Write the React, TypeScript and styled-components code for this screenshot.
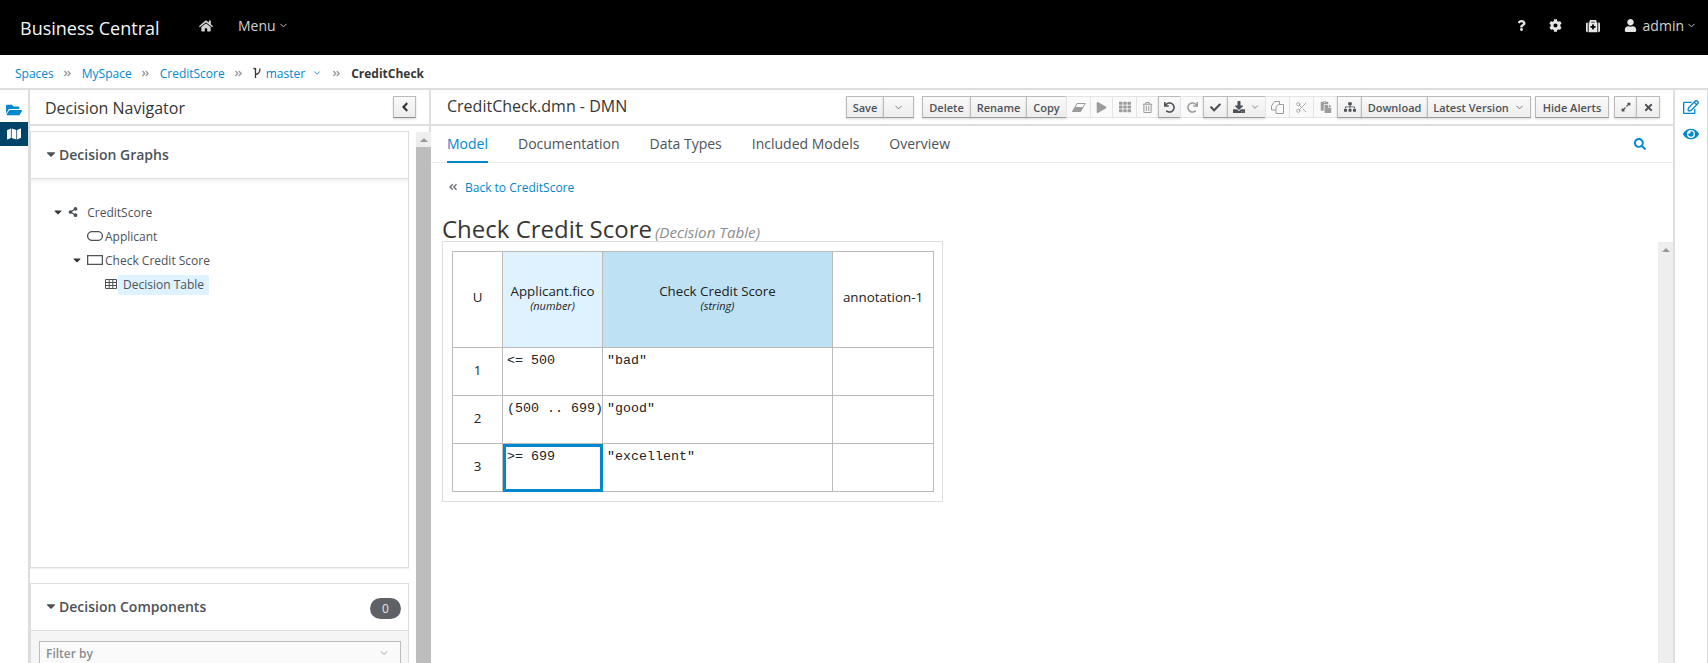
import React from 'react';
import styled, { createGlobalStyle } from 'styled-components';
import { ChevronDown, Scissors } from 'lucide-react';
import {
    FaHome, FaCog, FaMedkit, FaUser, FaQuestion, FaFolderOpen, FaMap, FaAngleLeft,
    FaAngleDoubleRight, FaAngleDoubleLeft, FaCaretDown, FaShareAlt, FaPlay, FaTh, FaRegTrashAlt,
    FaUndo, FaRedo, FaCheck, FaDownload, FaPaste, FaSitemap, FaExpandAlt, FaTimes,
    FaRegEdit, FaEye, FaSearch,
} from 'react-icons/fa';

const GlobalStyle = createGlobalStyle`
    html, body {
        margin: 0;
        padding: 0;
        height: 663px;
        overflow: hidden;
        background: #fff;
        font-family: "Open Sans", "Liberation Sans", sans-serif;
        color: #363636;
    }
    * { box-sizing: border-box; }
`;

const Page = styled.div`
    height: 663px;
    display: flex;
    flex-direction: column;
`;

const TopBar = styled.header`
    height: 55px;
    background: #000;
    color: #d1d1d1;
    display: flex;
    align-items: center;
    padding: 0 11px 0 20px;
    flex: none;
`;

const Brand = styled.div`
    font-size: 18px;
    color: #f5f5f5;
    width: 179px;
`;

const NavItem = styled.div<{ $gap?: number }>`
    display: flex;
    align-items: center;
    font-size: 14px;
    gap: 2px;
    margin-right: ${(p) => p.$gap ?? 0}px;
    margin-bottom: 4px;
`;

const Spacer = styled.div`
    flex: 1;
`;

const Crumbs = styled.nav`
    height: 35px;
    flex: none;
    border-bottom: 2px solid #dedede;
    display: flex;
    align-items: center;
    padding: 3px 0 0 15px;
    font-size: 12px;
    color: #72767b;
`;

const CrumbLink = styled.a`
    display: flex;
    align-items: center;
    color: #0088ce;
`;

const BranchName = styled(CrumbLink)`
    gap: 7px;
    margin-left: 5px;
    margin-right: 1px;
`;

const CrumbSep = styled.span`
    display: flex;
    color: #9c9c9c;
    margin: 0 10px 0 9px;
`;

const CrumbCurrent = styled.strong`
    color: #363636;
    font-weight: 700;
`;

const Body = styled.div`
    flex: 1;
    display: flex;
    min-height: 0;
`;

const LeftRail = styled.aside`
    width: 30px;
    flex: none;
    border-right: 2px solid #dedede;
    display: flex;
    flex-direction: column;
    padding-top: 8px;
`;

const RailItem = styled.div<{ $active?: boolean }>`
    height: 24px;
    display: flex;
    align-items: center;
    justify-content: center;
    font-size: 16px;
    background: ${(p) => (p.$active ? '#004368' : 'transparent')};
    color: ${(p) => (p.$active ? '#fff' : '#0088ce')};
`;

const NavPanel = styled.section`
    width: 401px;
    flex: none;
    border-right: 2px solid #dedede;
    display: flex;
    flex-direction: column;
`;

const PanelHead = styled.div`
    height: 36px;
    flex: none;
    border-bottom: 2px solid #dedede;
    display: flex;
    align-items: center;
    justify-content: space-between;
    padding: 1px 13px 0 15px;
    font-size: 16px;
`;

const Collapse = styled.div`
    width: 23px;
    height: 22px;
    margin-top: -1px;
    border: 1px solid #bbb;
    border-bottom-color: #8b8d8f;
    background: linear-gradient(#fafafa, #ededed);
    box-shadow: 0 1px 2px rgba(0, 0, 0, 0.15);
    display: flex;
    align-items: center;
    justify-content: center;
    font-size: 14px;
    color: #363636;
`;

const PanelBody = styled.div`
    flex: 1;
    display: flex;
    min-height: 0;
`;

const Cards = styled.div`
    width: 386px;
    flex: none;
    padding-top: 5px;
    display: flex;
    flex-direction: column;
    gap: 15px;
`;

const Card = styled.div`
    margin-left: -1px;
    margin-right: 7px;
    border: 1px solid #dedede;
    border-left-width: 2px;
    box-shadow: 0 1px 1px rgba(0, 0, 0, 0.06);
    flex: none;
`;

const CardHead = styled.div`
    height: 47px;
    display: flex;
    align-items: center;
    justify-content: space-between;
    padding: 0 7px 2px 13px;
    font-size: 14px;
    font-weight: 600;
    color: #4d5258;
    border-bottom: 1px solid #dedede;
`;

const CardTitle = styled.div`
    display: flex;
    align-items: center;
    gap: 1px;
`;

const Badge = styled.span`
    width: 31px;
    height: 21px;
    margin-top: 4px;
    border-radius: 11px;
    background: #5e6166;
    color: #e6e6e6;
    font-size: 12px;
    font-weight: 400;
    display: flex;
    align-items: center;
    justify-content: center;
`;

const TreeBody = styled.div`
    height: 388px;
    padding: 21px 0 0 21px;
    box-shadow: inset 0 6px 6px -6px rgba(0, 0, 0, 0.12);
`;

const TreeRow = styled.div<{ $indent: number }>`
    height: 24px;
    display: flex;
    align-items: center;
    padding-left: ${(p) => p.$indent}px;
    font-size: 12px;
    color: #4d5258;
`;

const TreeCaret = styled.span`
    width: 16px;
    display: flex;
    font-size: 12px;
    color: #363636;
`;

const TreeIcon = styled.span<{ $gap?: number }>`
    display: flex;
    margin-right: ${(p) => p.$gap ?? 2}px;
    color: #4d5258;
`;

const Selected = styled.span`
    background: #def3ff;
    border-radius: 2px;
    padding: 2px 5px;
    height: 20px;
    line-height: 16px;
    margin-top: 2px;
`;

const FilterWrap = styled.div`
    background: #f5f5f5;
    height: 60px;
    padding: 10px 8px;
`;

const FilterBox = styled.div`
    height: 30px;
    border: 1px solid #bbb;
    background: #fafafa;
    margin-right: -1px;
    padding: 0 10px 6px 6px;
    display: flex;
    align-items: center;
    justify-content: space-between;
    font-size: 12px;
    font-weight: 600;
    color: #8b8d8f;
`;

const ScrollBar = styled.div<{ $top: number }>`
    width: 15px;
    flex: none;
    margin-top: ${(p) => p.$top}px;
    background: #eee;
    display: flex;
    flex-direction: column;
`;

const ScrollArrow = styled.div`
    height: 15px;
    flex: none;
    display: flex;
    align-items: center;
    justify-content: center;
    &::before {
        content: '';
        border-left: 4px solid transparent;
        border-right: 4px solid transparent;
        border-bottom: 4px solid #999;
    }
`;

const ScrollThumb = styled.div`
    flex: 1;
    background: #bdbdbd;
`;

const Editor = styled.main`
    flex: 1;
    min-width: 0;
    display: flex;
    flex-direction: column;
`;

const EditorHead = styled.div`
    height: 36px;
    flex: none;
    border-bottom: 2px solid #dedede;
    display: flex;
    align-items: center;
    padding: 0 0 0 16px;
`;

const EditorTitle = styled.div`
    font-size: 16px;
    width: 399px;
    margin-bottom: 2px;
`;

const Toolbar = styled.div`
    display: flex;
    align-items: center;
`;

const ToolGroup = styled.div<{ $gap?: number }>`
    display: flex;
    margin-left: ${(p) => p.$gap ?? 0}px;
`;

const ToolBtn = styled.div<{ $w: number; $off?: boolean }>`
    width: ${(p) => p.$w}px;
    height: 22px;
    margin-right: -1px;
    border: 1px solid ${(p) => (p.$off ? '#e4e4e4' : '#bbb')};
    border-bottom-color: ${(p) => (p.$off ? '#e4e4e4' : '#9a9c9e')};
    background: ${(p) => (p.$off ? '#fafafa' : 'linear-gradient(#fafafa, #ededed)')};
    box-shadow: ${(p) => (p.$off ? 'none' : '0 1px 2px rgba(0, 0, 0, 0.15)')};
    color: ${(p) => (p.$off ? '#9c9c9c' : '#4d5258')};
    display: flex;
    align-items: center;
    justify-content: center;
    gap: 5px;
    font-size: 11px;
    font-weight: 600;
`;

const Tabs = styled.div`
    height: 37px;
    flex: none;
    border-bottom: 1px solid #ededed;
    display: flex;
    align-items: stretch;
    padding: 0 62px 0 16px;
    gap: 30px;
    font-size: 14px;
    color: #4d5258;
`;

const Tab = styled.div<{ $active?: boolean }>`
    display: flex;
    align-items: center;
    color: ${(p) => (p.$active ? '#0088ce' : '#4d5258')};
    border-bottom: 2px solid ${(p) => (p.$active ? '#0088ce' : 'transparent')};
    margin-bottom: -1px;
`;

const TabSearch = styled.div`
    margin-left: auto;
    display: flex;
    align-items: center;
    color: #0088ce;
    font-size: 12px;
`;

const EditorMain = styled.div`
    flex: 1;
    min-height: 0;
    display: flex;
`;

const Canvas = styled.div`
    flex: 1;
    min-width: 0;
    padding: 0 0 0 11px;
`;

const Back = styled.div`
    height: 52px;
    padding: 16px 0 0 6px;
    font-size: 12px;
    display: flex;
    align-items: flex-start;
    color: #0088ce;
`;

const BackIcon = styled.span`
    display: flex;
    color: #72767b;
    margin: 3px 7px 0 0;
    font-size: 10px;
`;

const Heading = styled.div`
    font-size: 24px;
    line-height: 28px;
    display: flex;
    align-items: baseline;
    gap: 3px;
    height: 26px;
`;

const HeadingSub = styled.small`
    font-size: 15.2px;
    font-style: italic;
    color: #8b8d8f;
`;

const TableBox = styled.div`
    width: 501px;
    height: 261px;
    border: 1px solid #dedede;
    padding: 9px;
`;

const Grid = styled.table`
    border-collapse: collapse;
    table-layout: fixed;
    width: 481px;
    height: 241px;
    color: #222;
`;

const Cell = styled.td<{ $bg?: string }>`
    border: 1px solid #bbb;
    background: ${(p) => p.$bg ?? '#fff'};
    padding: 0 0 5px;
    text-align: center;
    font-size: 13.33px;
    line-height: 16px;
`;

const RowCell = styled(Cell)`
    padding-bottom: 3px;
`;

const MonoCell = styled.td<{ $selected?: boolean }>`
    border: 1px solid #bbb;
    padding: 5px 0 0 4px;
    vertical-align: top;
    font: 13.33px/16px "Liberation Mono", monospace;
    white-space: nowrap;
    overflow: visible;
    ${(p) => p.$selected && 'outline: 3px solid #0088ce; outline-offset: -3px;'}
`;

const TypeLabel = styled.div`
    font-size: 11px;
    line-height: 13px;
    font-style: italic;
`;

const RightRail = styled.aside`
    width: 35px;
    flex: none;
    margin-top: -73px;
    border-left: 2px solid #dedede;
    border-right: 1px solid #dedede;
    display: flex;
    flex-direction: column;
    align-items: center;
    padding-top: 9px;
    gap: 11px;
    color: #0088ce;
    font-size: 16px;
    z-index: 1;
    background: #fff;
`;

const RailIcon = styled.div`
    height: 16px;
    display: flex;
    align-items: center;
`;

const BranchIcon = () => (
    <svg width="8" height="12" viewBox="0 0 8 12" fill="none" stroke="#363636" strokeWidth="1.3">
        <path d="M2.5 1v10M2.5 7.5c3-.5 4.5-2.500 4.500-6M0.500 1l2 1.500" />
    </svg>
);

const EraserIcon = () => (
    <svg width="14" height="9" viewBox="0 0 14 9" fill="none" stroke="currentColor" strokeWidth="1">
        <path d="M5 .5h8.300L8.500 8.500H.7Z" />
        <path d="M3 4.500h7.500L8.500 8.500H.7Z" fill="currentColor" />
    </svg>
);

const CloneIcon = () => (
    <svg width="13" height="13" viewBox="0 0 13 13" fill="none" stroke="currentColor" strokeWidth="1">
        <path d="M.5 5 3.500.5H8.500V9H.5Z" />
        <path d="M5 5.500 7.500 3.500H12.500V12.500H5Z" fill="#fafafa" />
    </svg>
);

const TableIcon = () => (
    <svg width="12" height="10" viewBox="0 0 12 10" fill="none" stroke="#4d5258" strokeWidth="1">
        <path d="M.5.5h11v9H.5ZM.5 3.500h11M.5 6.500h11M4.200 .5v9M7.800 .5v9" />
    </svg>
);

const DecisionShape = ({ rounded }: { rounded?: boolean }) => (
    <svg width="16" height="10" viewBox="0 0 16 10" fill="none" stroke="#4d5258" strokeWidth="1.3">
        <rect x="0.6" y="0.6" width="14.8" height="8.8" rx={rounded ? 4.4 : 0} />
    </svg>
);

const Sep = () => (
    <CrumbSep>
        <FaAngleDoubleRight size={9} />
    </CrumbSep>
);

const rows: { n: number; input: string; output: string; selected?: boolean }[] = [
    { n: 1, input: '<= 500', output: '"bad"' },
    { n: 2, input: '(500 .. 699)', output: '"good"' },
    { n: 3, input: '>= 699', output: '"excellent"', selected: true },
];

export default function App() {
    return (
        <Page>
            <GlobalStyle />
            <TopBar>
                <Brand>Business Central</Brand>
                <NavItem $gap={25}><FaHome size={14} /></NavItem>
                <NavItem>Menu <ChevronDown size={11} strokeWidth={2} /></NavItem>
                <Spacer />
                <NavItem $gap={22}><FaQuestion size={11} color="#e6e6e6" /></NavItem>
                <NavItem $gap={24}><FaCog size={13} color="#e6e6e6" /></NavItem>
                <NavItem $gap={24}><FaMedkit size={14} color="#e6e6e6" /></NavItem>
                <NavItem><FaUser size={13} color="#e6e6e6" /><span>&nbsp;admin</span> <ChevronDown size={11} strokeWidth={2} /></NavItem>
            </TopBar>
            <Crumbs>
                <CrumbLink>Spaces</CrumbLink>
                <Sep />
                <CrumbLink>MySpace</CrumbLink>
                <Sep />
                <CrumbLink>CreditScore</CrumbLink>
                <Sep />
                <BranchIcon />
                <BranchName>master <ChevronDown size={10} strokeWidth={2} /></BranchName>
                <Sep />
                <CrumbCurrent>CreditCheck</CrumbCurrent>
            </Crumbs>
            <Body>
                <LeftRail>
                    <RailItem><FaFolderOpen /></RailItem>
                    <RailItem $active><FaMap size={14} /></RailItem>
                </LeftRail>
                <NavPanel>
                    <PanelHead>
                        Decision Navigator
                        <Collapse><FaAngleLeft /></Collapse>
                    </PanelHead>
                    <PanelBody>
                        <Cards>
                            <Card>
                                <CardHead>
                                    <CardTitle><FaCaretDown size={14} /> Decision Graphs</CardTitle>
                                </CardHead>
                                <TreeBody>
                                    <TreeRow $indent={0}>
                                        <TreeCaret><FaCaretDown /></TreeCaret>
                                        <TreeIcon $gap={3}><FaShareAlt size={10} /></TreeIcon>
                                        &nbsp;&nbsp;CreditScore
                                    </TreeRow>
                                    <TreeRow $indent={35}>
                                        <TreeIcon><DecisionShape rounded /></TreeIcon>
                                        Applicant
                                    </TreeRow>
                                    <TreeRow $indent={19}>
                                        <TreeCaret><FaCaretDown /></TreeCaret>
                                        <TreeIcon><DecisionShape /></TreeIcon>
                                        Check Credit Score
                                    </TreeRow>
                                    <TreeRow $indent={53}>
                                        <TreeIcon $gap={1}><TableIcon /></TreeIcon>
                                        <Selected>Decision Table</Selected>
                                    </TreeRow>
                                </TreeBody>
                            </Card>
                            <Card>
                                <CardHead>
                                    <CardTitle><FaCaretDown size={14} /> Decision Components</CardTitle>
                                    <Badge>0</Badge>
                                </CardHead>
                                <FilterWrap>
                                    <FilterBox>Filter by <ChevronDown size={12} strokeWidth={1.6} /></FilterBox>
                                </FilterWrap>
                            </Card>
                        </Cards>
                        <ScrollBar $top={6}>
                            <ScrollArrow />
                            <ScrollThumb />
                        </ScrollBar>
                    </PanelBody>
                </NavPanel>
                <Editor>
                    <EditorHead>
                        <EditorTitle>CreditCheck.dmn - DMN</EditorTitle>
                        <Toolbar>
                            <ToolGroup>
                                <ToolBtn $w={38}>Save</ToolBtn>
                                <ToolBtn $w={31}><ChevronDown size={11} strokeWidth={1.6} /></ToolBtn>
                            </ToolGroup>
                            <ToolGroup $gap={9}>
                                <ToolBtn $w={49}>Delete</ToolBtn>
                                <ToolBtn $w={57}>Rename</ToolBtn>
                                <ToolBtn $w={41}>Copy</ToolBtn>
                                <ToolBtn $w={25} $off><EraserIcon /></ToolBtn>
                                <ToolBtn $w={23} $off><FaPlay size={11} /></ToolBtn>
                                <ToolBtn $w={25} $off><FaTh size={12} /></ToolBtn>
                                <ToolBtn $w={23} $off><FaRegTrashAlt size={11} /></ToolBtn>
                                <ToolBtn $w={23}><FaUndo size={11} /></ToolBtn>
                                <ToolBtn $w={24} $off><FaRedo size={11} /></ToolBtn>
                                <ToolBtn $w={25}><FaCheck size={11} /></ToolBtn>
                                <ToolBtn $w={39}><FaDownload size={12} /><ChevronDown size={10} strokeWidth={1.6} /></ToolBtn>
                                <ToolBtn $w={25} $off><CloneIcon /></ToolBtn>
                                <ToolBtn $w={25} $off><Scissors size={13} strokeWidth={1.5} /></ToolBtn>
                                <ToolBtn $w={25} $off><FaPaste size={12} /></ToolBtn>
                                <ToolBtn $w={25}><FaSitemap size={12} /></ToolBtn>
                                <ToolBtn $w={67}>Download</ToolBtn>
                                <ToolBtn $w={104}>Latest Version <ChevronDown size={11} strokeWidth={1.6} /></ToolBtn>
                            </ToolGroup>
                            <ToolGroup $gap={5}>
                                <ToolBtn $w={74}>Hide Alerts</ToolBtn>
                            </ToolGroup>
                            <ToolGroup $gap={6}>
                                <ToolBtn $w={23}><FaExpandAlt size={10} /></ToolBtn>
                                <ToolBtn $w={24}><FaTimes size={11} /></ToolBtn>
                            </ToolGroup>
                        </Toolbar>
                    </EditorHead>
                    <Tabs>
                        <Tab $active>Model</Tab>
                        <Tab>Documentation</Tab>
                        <Tab>Data Types</Tab>
                        <Tab>Included Models</Tab>
                        <Tab>Overview</Tab>
                        <TabSearch><FaSearch /></TabSearch>
                    </Tabs>
                    <EditorMain>
                        <Canvas>
                            <Back>
                                <BackIcon><FaAngleDoubleLeft /></BackIcon>
                                Back to CreditScore
                            </Back>
                            <Heading>
                                Check Credit Score
                                <HeadingSub>(Decision Table)</HeadingSub>
                            </Heading>
                            <TableBox>
                                <Grid>
                                    <colgroup>
                                        <col width={50} />
                                        <col width={100} />
                                        <col width={230} />
                                        <col width={101} />
                                    </colgroup>
                                    <tbody>
                                        <tr style={{ height: 96 }}>
                                            <Cell>U</Cell>
                                            <Cell $bg="#def3ff">
                                                Applicant.fico
                                                <TypeLabel>(number)</TypeLabel>
                                            </Cell>
                                            <Cell $bg="#bee1f4">
                                                Check Credit Score
                                                <TypeLabel>(string)</TypeLabel>
                                            </Cell>
                                            <Cell>annotation-1</Cell>
                                        </tr>
                                        {rows.map((r) => (
                                            <tr key={r.n} style={{ height: 48 }}>
                                                <RowCell>{r.n}</RowCell>
                                                <MonoCell $selected={r.selected}>{r.input}</MonoCell>
                                                <MonoCell>{r.output}</MonoCell>
                                                <RowCell />
                                            </tr>
                                        ))}
                                    </tbody>
                                </Grid>
                            </TableBox>
                        </Canvas>
                        <ScrollBar $top={79}>
                            <ScrollArrow />
                        </ScrollBar>
                        <RightRail>
                            <RailIcon><FaRegEdit /></RailIcon>
                            <RailIcon><FaEye /></RailIcon>
                        </RightRail>
                    </EditorMain>
                </Editor>
            </Body>
        </Page>
    );
}
